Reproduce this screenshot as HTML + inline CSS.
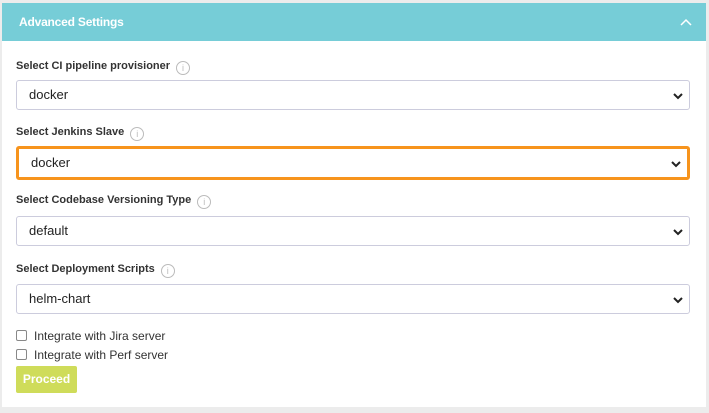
<!DOCTYPE html><html><head><style>
body{margin:0;width:709px;height:413px;background:#ececec;font-family:"Liberation Sans",sans-serif;overflow:hidden;position:relative}
.panel{position:absolute;left:2px;top:3px;width:704px;height:404px;background:#fff}
.hd{height:38px;background:#76cdd7;color:#fff;font-weight:bold;font-size:12px;line-height:38px;padding-left:17px;position:relative;letter-spacing:-0.2px}
.lbl{position:absolute;left:14px;font-size:11px;font-weight:bold;color:#333;line-height:14px}
.i{display:inline-block;width:12px;height:12px;border:1px solid #bbb;border-radius:50%;color:#bbb;font-size:9px;text-align:center;line-height:12px;margin-left:6px;font-weight:normal;vertical-align:-2px}
.sel{position:absolute;left:14px;width:674px;height:30px;border:1px solid #ccd;border-radius:3px;box-sizing:border-box;font-size:13px;color:#222;line-height:28px;padding-left:12px}
.sel svg{position:absolute;right:6px;top:11px}
.cb{position:absolute;left:14px;font-size:12px;color:#333}
.cb span{display:inline-block;width:9px;height:9px;border:1px solid #888;border-radius:2px;margin-right:7px;vertical-align:-1px}
.btn{position:absolute;left:14px;top:363px;width:61px;height:27px;background:#cfdc5a;border-radius:2px;color:#fff;font-weight:bold;font-size:12px;text-align:center;line-height:27px}
</style></head><body><div class="panel">
<div class="hd">Advanced Settings<svg style="position:absolute;right:14px;top:15px" width="12" height="8"><path d="M1 7L6 2L11 7" stroke="#fff" stroke-width="1.5" fill="none"/></svg></div>
<div class="lbl" style="top:56px">Select CI pipeline provisioner<span class="i">i</span></div>
<div class="sel" style="top:77px">docker<svg width="10" height="8"><path d="M1 2L5 6L9 2" stroke="#222" stroke-width="2" fill="none"/></svg></div>
<div class="lbl" style="top:122px">Select Jenkins Slave<span class="i">i</span></div>
<div class="sel" style="top:143px;height:34px;border:3px solid #f7941d;line-height:28px">docker<svg width="10" height="8" style="top:11px"><path d="M1 2L5 6L9 2" stroke="#222" stroke-width="2" fill="none"/></svg></div>
<div class="lbl" style="top:190px">Select Codebase Versioning Type<span class="i">i</span></div>
<div class="sel" style="top:213px">default<svg width="10" height="8"><path d="M1 2L5 6L9 2" stroke="#222" stroke-width="2" fill="none"/></svg></div>
<div class="lbl" style="top:259px">Select Deployment Scripts<span class="i">i</span></div>
<div class="sel" style="top:281px">helm-chart<svg width="10" height="8"><path d="M1 2L5 6L9 2" stroke="#222" stroke-width="2" fill="none"/></svg></div>
<div class="cb" style="top:326px"><span></span>Integrate with Jira server</div>
<div class="cb" style="top:345px"><span></span>Integrate with Perf server</div>
<div class="btn">Proceed</div>
</div></body></html>
